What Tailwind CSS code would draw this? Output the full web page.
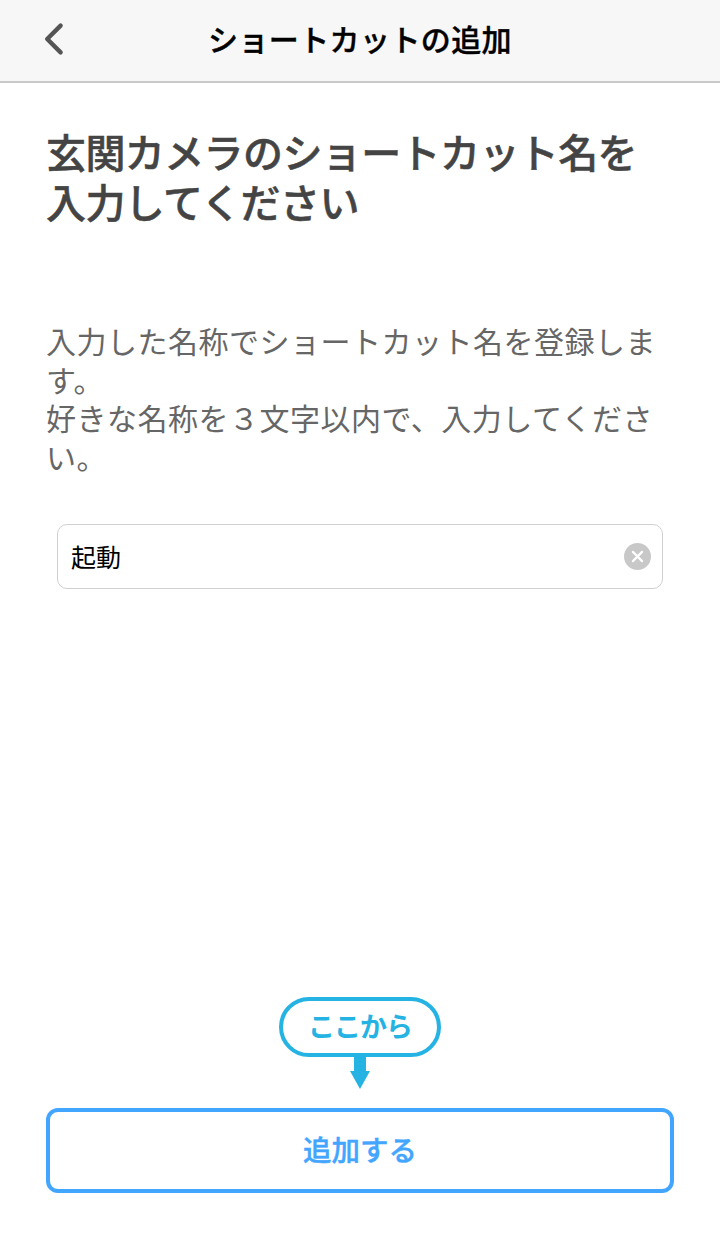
<!DOCTYPE html>
<html lang="ja">
<head>
  <meta charset="UTF-8" />
  <meta name="viewport" content="width=device-width, initial-scale=1.0" />
  <title>ショートカットの追加</title>
  <script src="https://cdn.jsdelivr.net/npm/@tailwindcss/browser@4"></script>
</head>
<body class="bg-white font-['Noto_Sans_CJK_JP',sans-serif]">
  <div class="flex h-[1239px] w-[720px] flex-col overflow-hidden">
    <!-- Header -->
    <header class="grid h-[83px] shrink-0 grid-cols-[120px_1fr_120px] items-center border-b-2 border-[#c9c9c9] bg-[#f7f7f7] pb-1">
      <button class="ml-[43px] w-6" aria-label="戻る">
        <svg class="block" width="24" height="34" viewBox="0 0 24 34" fill="none" stroke="#555555" stroke-width="4.4" stroke-linecap="round" stroke-linejoin="round">
          <path d="M17.6 3.6 L4.2 17 L17.6 30.4" />
        </svg>
      </button>
      <h1 class="pb-0.5 text-center text-[30px] leading-10 font-medium tracking-[0.4px] whitespace-nowrap text-black [-webkit-text-stroke:0.4px]">ショートカットの追加</h1>
    </header>

    <!-- Main Content -->
    <main class="flex grow flex-col px-[46px] pt-[43px] pb-[46px]">
      <h2 class="text-[40px] leading-[50px] font-medium tracking-[-0.6px] whitespace-nowrap text-[#444444] [-webkit-text-stroke:0.5px]">玄関カメラのショートカット名を<br>入力してください</h2>

      <p class="mt-[95px] text-[30px] leading-[38.7px] tracking-[0.5px] whitespace-nowrap text-[#666666]">入力した名称でショートカット名を登録しま<br>す。<br>好きな名称を３文字以内で、入力してくださ<br>い。</p>

      <!-- 名称の入力欄 -->
      <div class="mx-[11px] mt-12 flex h-[65px] shrink-0 items-center justify-between rounded-[10px] border border-[#d0d0d0] pr-[11px] pl-[13px]">
        <span class="text-[25px] leading-9 text-black">起動</span>
        <svg width="27" height="27" viewBox="0 0 27 27">
          <circle cx="13.5" cy="13.5" r="13.5" fill="#c8c8c8" />
          <path d="M8.9 8.9 L18.1 18.1 M18.1 8.9 L8.9 18.1" stroke="#ffffff" stroke-width="2.2" stroke-linecap="round" />
        </svg>
      </div>

      <!-- 案内の吹き出し -->
      <div class="mt-auto flex flex-col items-center text-[#24b3e2]">
        <div class="flex h-[60px] w-[162px] items-center justify-center rounded-full border-4 border-[#24b3e2] pb-1 text-[27px] leading-none font-bold tracking-[-1px]">ここから</div>
        <svg class="block" width="20" height="32" viewBox="0 0 20 32" fill="currentColor">
          <path d="M4 0 H16 V14 H20 L10 32 L0 14 H4 Z" />
        </svg>
      </div>

      <button class="mt-[19px] h-[85px] shrink-0 rounded-xl border-4 border-[#42a5ff] pb-[3px] text-[28.5px] font-medium text-[#42a5ff] [-webkit-text-stroke:0.4px]">追加する</button>
    </main>
  </div>
</body>
</html>
